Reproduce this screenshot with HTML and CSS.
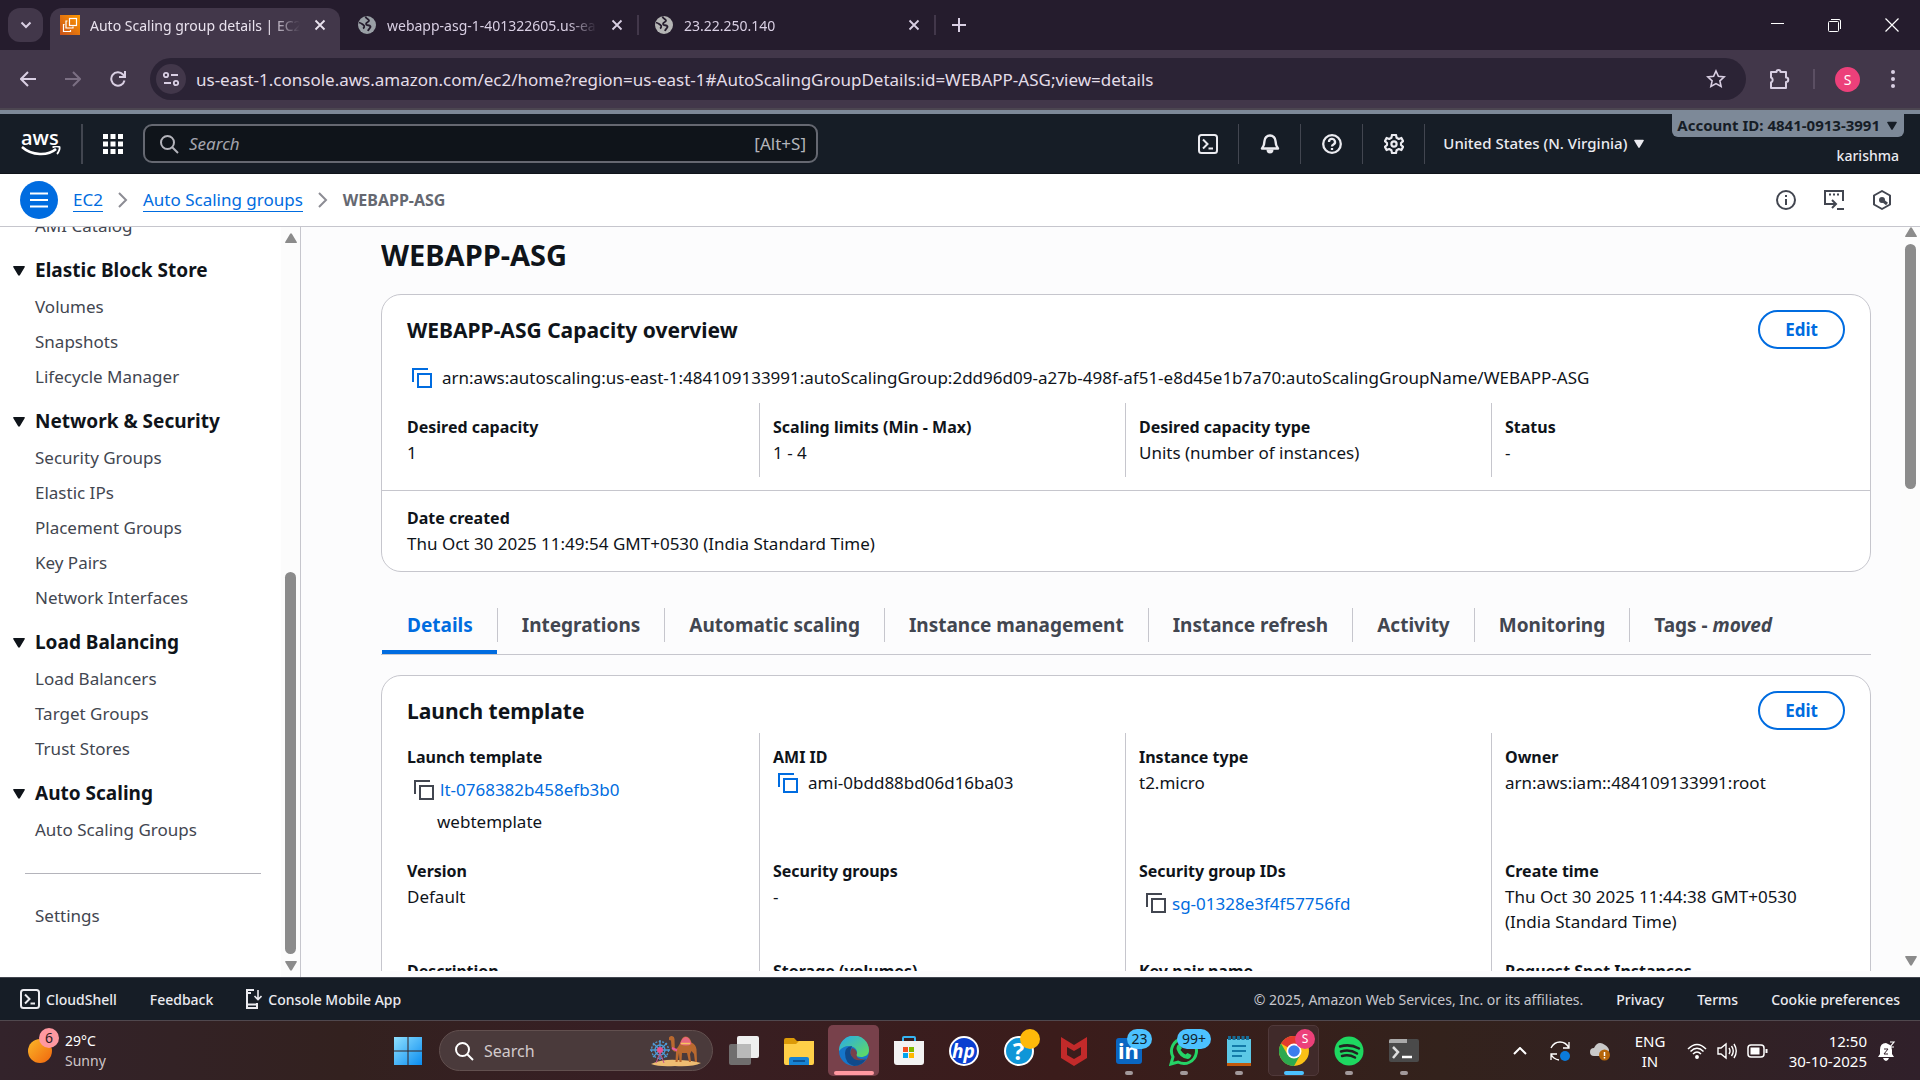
FILE: index.html
```html
<!DOCTYPE html>
<html lang="en">
<head>
<meta charset="utf-8">
<title>Auto Scaling group details | EC2</title>
<link rel="stylesheet" href="styles.css">
</head>
<body>
<svg class="defs" aria-hidden="true">
  <symbol id="close" viewBox="0 0 12 12"><path d="M1.5 1.5l9 9M10.500 1.500l-9 9" stroke="currentColor" stroke-width="1.800" fill="none"/></symbol>
  <symbol id="globe" viewBox="0 0 20 20"><circle cx="10" cy="10" r="9" fill="currentColor"/><path d="M8.500 1.500C9 4 11 3.500 12 5.500c.5 1.500-3 1.500-3 3.500s3.500.5 4.500 2.500c.5 1.500-2 2-2.500 4.500M2 7.500c2 .5 3 1.500 4.500 2.500 1.500 1 .5 3-.500 3.500" fill="none" stroke="#251c2d" stroke-width="1.800"/></symbol>
  <symbol id="copy" viewBox="0 0 20 20"><path d="M1 14V1h15" fill="none" stroke="currentColor" stroke-width="2"/><rect x="6" y="6" width="13" height="13" fill="none" stroke="currentColor" stroke-width="2"/></symbol>
  <symbol id="shell" viewBox="0 0 20 20"><rect x="1" y="1" width="18" height="18" rx="2.500" fill="none" stroke="currentColor" stroke-width="2"/><path d="M5 5.500l4.500 4.500L5 14.500M10.500 14.500H15" fill="none" stroke="currentColor" stroke-width="2"/></symbol>
  <symbol id="chev" viewBox="0 0 10 16"><path d="M1 1l7 7-7 7" fill="none" stroke="#8c8c94" stroke-width="2"/></symbol>
  <symbol id="tri" viewBox="0 0 12 10"><path d="M1 0h10q1.500 0 .5 1.500L7 9q-1 1.500-2 0L.5 1.500Q-.5 0 1 0z" fill="currentColor"/></symbol>
  <symbol id="mag" viewBox="0 0 20 20"><circle cx="8.500" cy="8.500" r="6.500" fill="none" stroke="currentColor" stroke-width="2"/><path d="M13 13l6 6" stroke="currentColor" stroke-width="2"/></symbol>
</svg>

<header class="browser">
  <div class="tabstrip">
    <button class="tab-search" aria-label="Search tabs"><svg width="12" height="8" viewBox="0 0 12 8"><path d="M1.500 1.500L6 6l4.500-4.500" fill="none" stroke="currentColor" stroke-width="2"/></svg></button>
    <div class="btab active">
      <svg class="fav" viewBox="0 0 20 20"><defs><linearGradient id="og" x1="0" y1="1" x2="1" y2="0"><stop offset="0" stop-color="#c8511b"/><stop offset="1" stop-color="#f90"/></linearGradient></defs><rect width="20" height="20" fill="url(#og)"/><g fill="none" stroke="#fff" stroke-width="1.200"><rect x="9.500" y="3.500" width="7" height="7"/><path d="M7.500 6h-1.500v7h7v-1.500M4.500 9.500H3.500v7h7v-1.500"/></g></svg>
      <span class="btitle">Auto Scaling group details | EC2 | us-east-1</span>
      <button class="x" aria-label="Close tab"><svg width="12" height="12"><use href="#close"/></svg></button>
    </div>
    <div class="btab">
      <svg class="fav grey-globe"><use href="#globe"/></svg>
      <span class="btitle">webapp-asg-1-401322605.us-east-1.elb</span>
      <button class="x" aria-label="Close tab"><svg width="12" height="12"><use href="#close"/></svg></button>
    </div>
    <span class="bsep"></span>
    <div class="btab third">
      <svg class="fav light-globe"><use href="#globe"/></svg>
      <span class="btitle">23.22.250.140</span>
      <button class="x" aria-label="Close tab"><svg width="12" height="12"><use href="#close"/></svg></button>
    </div>
    <span class="bsep"></span>
    <button class="newtab" aria-label="New tab"><svg width="14" height="14" viewBox="0 0 14 14"><path d="M7 0v14M0 7h14" stroke="currentColor" stroke-width="2"/></svg></button>
    <div class="winctl">
      <button aria-label="Minimize"><svg width="14" height="14"><path d="M0 5.500h13" stroke="currentColor"/></svg></button>
      <button aria-label="Restore"><svg width="14" height="14" fill="none" stroke="currentColor"><rect x=".5" y="3.500" width="10" height="10" rx="1"/><path d="M3 1.500h8q1.500 0 1.500 1.500v8"/></svg></button>
      <button aria-label="Close"><svg width="14" height="14"><path d="M.5.5l13 13M13.500.5l-13 13" stroke="currentColor" stroke-width="1.200"/></svg></button>
    </div>
  </div>
  <div class="toolbar">
    <button class="nav" aria-label="Back"><svg width="16" height="16" viewBox="0 0 16 16"><path d="M16 8H1M8 1L1 8l7 7" fill="none" stroke="currentColor" stroke-width="2"/></svg></button>
    <button class="nav dim" aria-label="Forward"><svg width="16" height="16" viewBox="0 0 16 16"><path d="M0 8h15M8 1l7 7-7 7" fill="none" stroke="currentColor" stroke-width="2"/></svg></button>
    <button class="nav" aria-label="Reload"><svg width="16" height="16" viewBox="0 0 16 16"><path d="M14.500 9.500A6.700 6.700 0 1 1 13 3.500L14.500 5M15 0v6H9" fill="none" stroke="currentColor" stroke-width="2"/></svg></button>
    <div class="omni">
      <button class="site" aria-label="Site information"><svg width="16" height="16" viewBox="0 0 16 16" fill="none" stroke="currentColor" stroke-width="1.800"><circle cx="3" cy="4" r="2.200"/><path d="M8 4h7M1 12h7"/><circle cx="13" cy="12" r="2.200"/></svg></button>
      <input class="url" aria-label="Address" value="us-east-1.console.aws.amazon.com/ec2/home?region=us-east-1#AutoScalingGroupDetails:id=WEBAPP-ASG;view=details">
      <button class="star" aria-label="Bookmark"><svg width="20" height="20" viewBox="0 0 20 20"><path d="M10 2l2.400 5.300 5.800.6-4.300 3.900 1.200 5.700L10 14.600l-5.100 2.900 1.200-5.700L1.800 7.900l5.800-.6z" fill="none" stroke="currentColor" stroke-width="1.600"/></svg></button>
    </div>
    <button class="ext" aria-label="Extensions"><svg width="22" height="22" viewBox="0 0 22 22"><path d="M2 4h5.500a2 2 0 1 1 4 0H17v5.500a2.200 2.200 0 1 1 0 4.500v6H2v-5.500a2.700 2.700 0 0 0 0-5z" fill="none" stroke="currentColor" stroke-width="2" stroke-linejoin="round"/></svg></button>
    <span class="tsep"></span>
    <button class="avatar">S</button>
    <button class="dots" aria-label="Menu"><svg width="4" height="20" fill="currentColor"><circle cx="2" cy="3" r="2"/><circle cx="2" cy="10" r="2"/><circle cx="2" cy="17" r="2"/></svg></button>
  </div>
</header>

<div class="console">
<header class="awsbar">
  <a class="logo" href="#" aria-label="AWS home"><span>aws</span><svg width="40" height="11" viewBox="0 0 40 11"><path d="M1 1c10 9 26 9 34 2" fill="none" stroke="#fff" stroke-width="2.500"/><path d="M31.500 1.500c3-1.500 6-1 7-.5.500 1.500-.500 5-2.500 7" fill="none" stroke="#fff" stroke-width="1.800"/></svg></a>
  <button class="apps" aria-label="Services"><svg width="20" height="20" fill="#fff"><path d="M0 0h5v5H0zM7.500 0h5v5h-5zM15 0h5v5h-5zM0 7.500h5v5H0zM7.500 7.500h5v5h-5zM15 7.500h5v5h-5zM0 15h5v5H0zM7.500 15h5v5h-5zM15 15h5v5h-5z"/></svg></button>
  <label class="search"><svg width="20" height="20"><use href="#mag"/></svg><input type="text" placeholder="Search" aria-label="Search"><span>[Alt+S]</span></label>
  <div class="awsicons">
    <button aria-label="CloudShell"><svg width="20" height="20"><use href="#shell"/></svg></button>
    <button aria-label="Notifications"><svg width="20" height="20" viewBox="0 0 20 20"><path d="M10 1.500a5.500 5.500 0 0 0-5.500 5.500c0 4-1 5.500-2.500 7.500h16c-1.500-2-2.500-3.500-2.500-7.500A5.500 5.500 0 0 0 10 1.500z" fill="none" stroke="currentColor" stroke-width="2.400" stroke-linejoin="round"/><path d="M6.500 15.500a3.500 4 0 0 0 7 0z" fill="currentColor"/></svg></button>
    <button aria-label="Help"><svg width="20" height="20" viewBox="0 0 20 20" fill="none" stroke="currentColor" stroke-width="2.300"><circle cx="10" cy="10" r="8.800"/><path d="M7 8a3 3 0 1 1 4.500 2.500C10.300 11.200 10 11.500 10 12.500M10 14v2"/></svg></button>
    <button aria-label="Settings"><svg width="20" height="20" viewBox="0 0 20 20" fill="none" stroke="currentColor" stroke-width="2.200" stroke-linejoin="round"><path d="M8 1h4l.6 2.800 2.200 1.200 2.600-1 1.700 3.200L17 9v2l2.100 1.800-1.700 3.200-2.600-1-2.200 1.200L12 19H8l-.6-2.800L5.200 15l-2.600 1-1.700-3.200L3 11V9L.9 7.200 2.600 4l2.600 1 2.200-1.200z"/><circle cx="10" cy="10" r="2.600"/></svg></button>
  </div>
  <button class="region">United States (N. Virginia)<svg width="10" height="10"><use href="#tri"/></svg></button>
  <div class="account"><button class="acct">Account ID: 4841-0913-3991<svg width="10" height="10"><use href="#tri"/></svg></button><span class="user">karishma</span></div>
</header>

<nav class="crumbs">
  <button class="burger" aria-label="Toggle navigation"><svg width="18" height="16"><path d="M0 1.500h18M0 8h18M0 14.500h18" stroke="#fff" stroke-width="2"/></svg></button>
  <a href="#">EC2</a><svg class="cv"><use href="#chev"/></svg><a href="#">Auto Scaling groups</a><svg class="cv"><use href="#chev"/></svg><b>WEBAPP-ASG</b>
  <div class="tools">
    <button aria-label="Info"><svg width="20" height="20" viewBox="0 0 20 20" fill="none" stroke="currentColor" stroke-width="2"><circle cx="10" cy="10" r="9"/><path d="M10 9v6M10 5v2"/></svg></button>
    <button aria-label="Code"><svg width="20" height="20" viewBox="0 0 20 20" fill="none" stroke="currentColor" stroke-width="2"><path d="M5 14H1V1h18v10M13 19h7M5 14h6M8 10l4 4-4 4"/><path d="M5 4.500h2M9 4.500h2M13 4.500h2"/></svg></button>
    <button aria-label="Amazon Q"><svg width="20" height="20" viewBox="0 0 20 20" fill="none" stroke="currentColor" stroke-width="2"><path d="M10 1l8 4.500v9L10 19l-8-4.500v-9z" stroke-linejoin="round"/><circle cx="10" cy="10" r="2" fill="currentColor"/><path d="M10 10l5 4" stroke-width="3"/></svg></button>
  </div>
</nav>

<div class="body">
  <aside class="side">
    <div class="sidenav">
      <ul><li><a href="#">AMI Catalog</a></li></ul>
      <h3><svg width="12" height="10"><use href="#tri"/></svg>Elastic Block Store</h3>
      <ul><li><a href="#">Volumes</a></li><li><a href="#">Snapshots</a></li><li><a href="#">Lifecycle Manager</a></li></ul>
      <h3><svg width="12" height="10"><use href="#tri"/></svg>Network &amp; Security</h3>
      <ul><li><a href="#">Security Groups</a></li><li><a href="#">Elastic IPs</a></li><li><a href="#">Placement Groups</a></li><li><a href="#">Key Pairs</a></li><li><a href="#">Network Interfaces</a></li></ul>
      <h3><svg width="12" height="10"><use href="#tri"/></svg>Load Balancing</h3>
      <ul><li><a href="#">Load Balancers</a></li><li><a href="#">Target Groups</a></li><li><a href="#">Trust Stores</a></li></ul>
      <h3><svg width="12" height="10"><use href="#tri"/></svg>Auto Scaling</h3>
      <ul><li><a href="#">Auto Scaling Groups</a></li></ul>
      <hr>
      <ul><li><a href="#">Settings</a></li></ul>
    </div>
    <div class="bar sidebar-bar"><svg class="up" width="12" height="10"><use href="#tri"/></svg><i class="before"></i><i class="thumb"></i><svg width="12" height="10"><use href="#tri"/></svg></div>
  </aside>

  <main class="content">
    <div class="scroll">
    <h1>WEBAPP-ASG</h1>
    <section class="card">
      <div class="chead"><h2>WEBAPP-ASG Capacity overview</h2><button class="edit">Edit</button></div>
      <div class="arn"><button class="cp" aria-label="Copy ARN"><svg width="20" height="20"><use href="#copy"/></svg></button><span>arn:aws:autoscaling:us-east-1:484109133991:autoScalingGroup:2dd96d09-a27b-498f-af51-e8d45e1b7a70:autoScalingGroupName/WEBAPP-ASG</span></div>
      <dl class="grid">
        <div><dt>Desired capacity</dt><dd>1</dd></div>
        <div><dt>Scaling limits (Min - Max)</dt><dd>1 - 4</dd></div>
        <div><dt>Desired capacity type</dt><dd>Units (number of instances)</dd></div>
        <div><dt>Status</dt><dd>-</dd></div>
      </dl>
      <dl class="foot"><dt>Date created</dt><dd>Thu Oct 30 2025 11:49:54 GMT+0530 (India Standard Time)</dd></dl>
    </section>

    <nav class="tabs">
      <button class="on">Details</button><button>Integrations</button><button>Automatic scaling</button><button>Instance management</button><button>Instance refresh</button><button>Activity</button><button>Monitoring</button><button><span>Tags - <em>moved</em></span></button>
    </nav>

    <section class="card">
      <div class="chead"><h2>Launch template</h2><button class="edit">Edit</button></div>
      <dl class="grid many">
        <div><dt>Launch template</dt><dd class="idrow"><button class="cp grey" aria-label="Copy template ID"><svg width="20" height="20"><use href="#copy"/></svg></button><a href="#">lt-0768382b458efb3b0</a></dd><dd class="sub">webtemplate</dd></div>
        <div><dt>AMI ID</dt><dd class="ami"><button class="cp" aria-label="Copy AMI ID"><svg width="20" height="20"><use href="#copy"/></svg></button>ami-0bdd88bd06d16ba03</dd></div>
        <div><dt>Instance type</dt><dd>t2.micro</dd></div>
        <div><dt>Owner</dt><dd>arn:aws:iam::484109133991:root</dd></div>
        <div><dt>Version</dt><dd>Default</dd></div>
        <div><dt>Security groups</dt><dd>-</dd></div>
        <div><dt>Security group IDs</dt><dd class="idrow"><button class="cp grey" aria-label="Copy group ID"><svg width="20" height="20"><use href="#copy"/></svg></button><a href="#">sg-01328e3f4f57756fd</a></dd></div>
        <div><dt>Create time</dt><dd>Thu Oct 30 2025 11:44:38 GMT+0530<br>(India Standard Time)</dd></div>
        <div><dt>Description</dt><dd>-</dd></div>
        <div><dt>Storage (volumes)</dt><dd>-</dd></div>
        <div><dt>Key pair name</dt><dd>-</dd></div>
        <div><dt>Request Spot Instances</dt><dd>No</dd></div>
      </dl>
    </section>
    </div>
  </main>
  <div class="bar main-bar"><svg class="up" width="12" height="10"><use href="#tri"/></svg><i class="thumb"></i><i class="after"></i><svg width="12" height="10"><use href="#tri"/></svg></div>
</div>

<footer class="awsfoot">
  <button><svg width="20" height="20"><use href="#shell"/></svg>CloudShell</button>
  <a href="#">Feedback</a>
  <a href="#" class="mob"><svg width="16" height="20" viewBox="0 0 16 20" fill="none" stroke="currentColor" stroke-width="2"><path d="M8 1H1v18h10v-5M1 15.500h10M1 4h4"/><path d="M12 1v9M8.500 7l3.500 3.500L15.500 7" stroke-width="1.600"/></svg>Console Mobile App</a>
  <span class="copyr">© 2025, Amazon Web Services, Inc. or its affiliates.</span>
  <a href="#">Privacy</a><a href="#">Terms</a><a href="#">Cookie preferences</a>
</footer>
</div>

<footer class="taskbar">
  <div class="weather"><span class="sun"><i>6</i></span><span>29°C<br><em>Sunny</em></span></div>
  <div class="apps-row">
    <button class="start" aria-label="Start"><svg width="30" height="30" viewBox="0 0 30 30"><defs><linearGradient id="wg" x1="0" y1="0" x2="1" y2="1"><stop offset="0" stop-color="#8fe0ff"/><stop offset="1" stop-color="#0a8cf0"/></linearGradient></defs><path d="M1 1h13.500v13.500H1zM15.500 1H29v13.500H15.500zM1 15.500h13.500V29H1zM15.500 15.500H29V29H15.500z" fill="url(#wg)"/></svg></button>
    <label class="tsearch"><svg width="20" height="20"><use href="#mag"/></svg><input type="text" placeholder="Search" aria-label="Search Windows">
      <svg width="52" height="32" viewBox="0 0 52 32"><path d="M1 29q12-5 26-4 14 0 24 3-8 4-26 3-16 1-24-2z" fill="#eebd72"/><g fill="none" stroke="#4d9bd8" stroke-width="1.300"><circle cx="10" cy="15" r="8.500" stroke-dasharray="2 1.500"/><circle cx="10" cy="15" r="5"/><path d="M10 5v20M0 15h20M3 8l14 14M17 8L3 22"/></g><circle cx="10" cy="15" r="3" fill="#e8508f"/><path d="M6 28l4-10 4 10" fill="none" stroke="#c8508f"/><path d="M19 2.500q1-2 3-1.500 2.500.5 2.500 3l.3 9q1.200 2 3.200-1 2-3 3-6.500Q33 1 36 1.500q4 .5 5.500 6 4.500 2 5 7l.5 12.500h-2l-1-8-2.500-3-1.500 3 1 8h-2l-2-9-5 0-.5 9h-2l-.500-9-1.500 9h-2l.500-10.500Q22.500 17.500 21.500 12L21 5.500l-2-.5z" fill="#b9692f"/><path d="M30 9q2.500-7.500 6-7 3.500 0 5.500 7-5.500 3-11.500 0z" fill="#e8687f"/><path d="M31 8.500h9" stroke="#f6c65c" stroke-width="1.500"/><path d="M22 13l5 2.500" stroke="#e85ba0" stroke-width="2"/></svg></label>
    <button class="app" aria-label="Task view"><svg width="30" height="30"><rect x="8" width="22" height="22" rx="2" fill="#efefef"/><rect y="8" width="22" height="21" rx="2" fill="#777" opacity=".9"/><rect x="8" y="8" width="14" height="14" fill="#b9b9b9"/></svg></button>
    <button class="app" aria-label="File Explorer"><svg width="30" height="30"><path d="M0 4q0-2 2-2h8l3 3h15q2 0 2 2v8H0z" fill="#dc9a08"/><path d="M0 8h12l3-3h15v22q0 2-2 2H2q-2 0-2-2z" fill="#ffcf48"/><path d="M5 29v-6q0-2 2-2h16q2 0 2 2v6z" fill="#1683d4"/><path d="M9 25h12" stroke="#0b5394" stroke-width="2"/></svg></button>
    <button class="app tile edge" aria-label="Edge"><svg width="30" height="30" viewBox="0 0 30 30"><defs><linearGradient id="eg" x1="0" y1="0" x2="1" y2="1"><stop offset="0" stop-color="#27a8ef"/><stop offset="1" stop-color="#63df58"/></linearGradient></defs><circle cx="15" cy="15" r="15" fill="#1676ca"/><path d="M0 15A15 15 0 0 1 30 14c0 5-4 7-8 7-5 0-6-2-4-4 1-6-11-11-18-2z" fill="url(#eg)"/><path d="M6 17q0-6 7-7-4 8 2 12 6 4 12 1-4 7-12 7-9-2-9-13z" fill="#114a8b"/><path d="M18 17q-1-4-5-5-4 6 2 11 6 3 13-1-2 1-6 1-6-1-4-6z" fill="#78414b"/></svg></button>
    <button class="app" aria-label="Store"><svg width="30" height="30"><path d="M9 6V2q0-1 1-1h10q1 0 1 1v4" fill="none" stroke="#35b4f3" stroke-width="2"/><path d="M0 5h30v21q0 3-3 3H3q-3 0-3-3z" fill="#f3f3f3"/><path fill="#f25022" d="M9 11h5v5H9z"/><path fill="#7fba00" d="M15 11h5v5h-5z"/><path fill="#00a4ef" d="M9 17h5v5H9z"/><path fill="#ffb900" d="M15 17h5v5h-5z"/></svg></button>
    <button class="app" aria-label="HP"><span class="hp">hp</span></button>
    <button class="app" aria-label="Get help"><span class="help">?</span><i class="badge yellow"></i></button>
    <button class="app" aria-label="McAfee"><svg width="28" height="30"><path d="M1 1l13 8 13-8v21l-13 8-13-8zM7 11v8l7 4 7-4v-8l-7 4z" fill="#c22a2a" fill-rule="evenodd"/></svg></button>
    <button class="app run" aria-label="LinkedIn"><span class="li">in</span><i class="badge">23</i></button>
    <button class="app run" aria-label="WhatsApp"><svg width="30" height="30"><path d="M2 28l2-7A12.500 12.500 0 1 1 9 26z" fill="none" stroke="#25d366" stroke-width="3"/><path d="M10 8l3 4-1.500 2q2 3 5 4.500l2-1.500 4 2q-1 4-4 4-8-1-11-10 0-4 2.500-5z" fill="#25d366"/></svg><i class="badge wide">99+</i></button>
    <button class="app run" aria-label="Notepad"><svg width="24" height="30"><path d="M0 26h24v4H0z" fill="#c2590c"/><path d="M0 3h24v24H0z" fill="#5cc8e6"/><path d="M1 2h22" stroke="#176c96" stroke-width="4" stroke-dasharray="3 1.500"/><path d="M5 10h14M5 15h14M5 20h10" stroke="#137aa8" stroke-width="2"/></svg></button>
    <button class="app tile chrome" aria-label="Chrome"><svg width="30" height="30" viewBox="-15 -15 30 30"><circle r="15" fill="#fbc116"/><path d="M0 0L-13-7.500A15 15 0 0 1 13-7.500z" fill="#e33b2e"/><path d="M-13-7.500A15 15 0 0 0 0 15L6.500 3.500-6.500 3.500z" fill="#2da94f"/><circle r="7.500" fill="#fff"/><circle r="5.800" fill="#3b7ded"/></svg><i class="badge pink">S</i></button>
    <button class="app run" aria-label="Spotify"><svg width="30" height="30"><circle cx="15" cy="15" r="14.500" fill="#1ed760"/><path d="M6 10.500q10-3 19 2M7 15.500q9-2.500 16 2M8 20q7-2 13 1.500" fill="none" stroke="#222" stroke-width="2.500" stroke-linecap="round"/></svg></button>
    <button class="app run" aria-label="Terminal"><svg width="30" height="24"><rect width="30" height="23" rx="2" fill="#4a4a4a"/><path d="M0 4V2q0-2 2-2h16v4z" fill="#aaa"/><path d="M4 8l5 5-5 6" fill="none" stroke="#ddd" stroke-width="2.500"/><path d="M13 18h10" stroke="#fff" stroke-width="2.500"/></svg></button>
  </div>
  <div class="tray">
    <svg width="14" height="8"><path d="M1 7l6-6 6 6" fill="none" stroke="#fff" stroke-width="2"/></svg>
    <svg width="20" height="20"><path d="M1 7Q4 1 10 1t9 6M19 1v6h-6M1 19v-6h6M1 13q2 5 8 6" fill="none" stroke="#fff" stroke-width="1.300"/><circle cx="15" cy="15" r="5" fill="#0b7bdc"/></svg>
    <svg width="20" height="20"><path d="M4 15a4 4 0 0 1 0-8q4-8 11-3 6 4 3 8l-5 3z" fill="#c9c9c9"/><circle cx="14.500" cy="14" r="5.500" fill="#b5650a"/><path d="M14.500 11v4M14.500 16v1.500" stroke="#fff" stroke-width="1.500"/></svg>
    <span class="lang">ENG<br>IN</span>
    <svg width="20" height="16" viewBox="0 0 20 16" fill="none" stroke="#fff" stroke-width="1.500"><path d="M1 6q9-9 18 0M3.500 8.500q6.500-6.500 13 0M6 11q4-4 8 0"/><circle cx="10" cy="14" r="1.200" fill="#fff"/></svg>
    <svg width="20" height="18" viewBox="0 0 20 18" fill="none" stroke="#fff" stroke-width="1.400"><path d="M1 6h3l5-4v14l-5-4H1zM12 6q2 3 0 6M14.500 4q3.500 5 0 10M17 2q4.500 7 0 14"/></svg>
    <svg width="21" height="14" viewBox="0 0 21 14"><rect x="1" y="1" width="16" height="12" rx="3" fill="none" stroke="#fff" stroke-width="1.500"/><rect x="3.500" y="3.500" width="9" height="7" fill="#fff"/><path d="M19.500 5v4" stroke="#fff" stroke-width="2"/></svg>
    <span class="clock">12:50<br>30-10-2025</span>
    <svg width="18" height="20" viewBox="0 0 18 20"><path d="M8 2q-6 0-6 7v4l-2 3h16l-2-3V9q0-3-2-5zM5 17h6q-1 3-3 3t-3-3z" fill="#fff"/><path d="M6 8h4l-4 5h4" stroke="#33202b" fill="none"/><path d="M12 1h4l-4 5h4" stroke="#fff" stroke-width="1.200" fill="none"/></svg>
  </div>
</footer>
</body>
</html>
```

FILE: styles.css
```css
* { box-sizing: border-box; }
body { margin: 0; height: 100vh; display: flex; flex-direction: column; overflow: hidden; font: 17px/25px "Noto Sans", sans-serif; color: #0f141a; }
button, input { font: inherit; color: inherit; background: none; border: 0; padding: 0; margin: 0; outline: 0; }
button { display: flex; align-items: center; justify-content: center; cursor: pointer; }
a { color: #006ce0; text-decoration: none; }
svg { display: block; flex: none; }
ul, dl, dd { margin: 0; padding: 0; list-style: none; }
h1, h2, h3 { margin: 0; }
.defs { position: absolute; width: 0; height: 0; }

/* browser chrome */
.browser { background: #42374a; color: #d9cfe3; }
.tabstrip { background: #251c2d; height: 50px; display: flex; align-items: center; padding-left: 8px; font-size: 14px; }
.tab-search { width: 35px; height: 34px; border-radius: 12px; background: #42374a; margin-right: 7px; }
.btab { width: 290px; height: 42px; align-self: flex-end; display: flex; align-items: center; padding: 0 14px 8px 10px; margin-left: 1px; }
.btab.active { background: #42374a; color: #e9e2ee; border-radius: 12px 12px 0 0; margin: 0 6px 0 0; }
.btab.third { margin-left: 5px; }
.fav { width: 20px; height: 20px; margin-right: 10px; }
.grey-globe { color: #9aa0a6; }
.light-globe { color: #b5b5b5; }
.btitle { flex: 1; overflow: hidden; white-space: nowrap; margin-right: 14px; -webkit-mask-image: linear-gradient(90deg, #000 86%, transparent); mask-image: linear-gradient(90deg, #000 86%, transparent); }
.bsep { width: 2px; height: 20px; background: #42374a; }
.newtab { width: 40px; height: 34px; margin-left: 3px; }
.winctl { margin-left: auto; display: flex; color: #fff; }
.winctl button { width: 57px; height: 50px; }
.toolbar { height: 60px; display: flex; align-items: center; padding: 0 14px 0 5px; border-bottom: 2px solid #4c4651; }
.nav { width: 45px; height: 40px; }
.nav.dim { color: #7b6f83; }
.omni { flex: 1; height: 42px; margin-left: 10px; border-radius: 21px; background: #2b2335; display: flex; align-items: center; padding: 0 20px 0 6px; }
.site { width: 30px; height: 30px; border-radius: 50%; background: #42374a; margin-right: 10px; }
.url { flex: 1; min-width: 0; height: 30px; color: #e3dde8; }
.ext { width: 67px; }
.tsep { width: 2px; height: 20px; background: #5b4f63; }
.avatar { width: 25px; height: 25px; border-radius: 50%; background: #ec407a; color: #fff; font-size: 14px; margin: 0 20px; }
.dots { width: 26px; }

/* console header */
.console { flex: 1; min-height: 0; display: flex; flex-direction: column; }
.awsbar { height: 64px; border-top: 4px solid #7d8998; background: #161d26; color: #ebebf0; display: flex; align-items: center; font-weight: 500; font-size: 15px; border-bottom: 1px solid #0f141a; }
.logo { width: 83px; height: 40px; border-right: 2px solid #424650; padding-left: 21px; color: #fff; display: flex; flex-direction: column; justify-content: center; }
.logo span { font: 600 20px/16px "Open Sans", sans-serif; }
.apps { width: 60px; }
.search { width: 675px; height: 39px; border: 2px solid #656871; border-radius: 9px; background: #0f141a; display: flex; align-items: center; padding: 0 10px 0 14px; font-weight: 400; font-size: 17px; color: #b4b4bb; }
.search input { flex: 1; min-width: 0; padding-left: 10px; }
.search input::placeholder { color: #a4a4ad; font-style: italic; opacity: 1; }
.awsicons { margin-left: auto; display: flex; }
.awsicons button { width: 62px; height: 40px; border-right: 1px solid #424650; }
.region { padding: 0 28px 0 18px; gap: 7px; }
.account { align-self: stretch; display: flex; flex-direction: column; align-items: flex-end; padding-right: 16px; }
.acct { height: 23px; background: #7d8998; color: #161d26; font-weight: 700; padding: 0 7px 0 5px; gap: 7px; border-radius: 0 0 6px 6px; }
.user { margin: 6px 5px 0 0; font-size: 14px; }
.crumbs { height: 53px; flex: none; display: flex; align-items: center; padding: 0 28px 0 20px; border-bottom: 1px solid #c6c6cd; background: #fff; }
.crumbs a { border-bottom: 1px solid #006ce0; line-height: 22px; }
.crumbs b { color: #656871; font-size: 16px; }
.burger { width: 38px; height: 38px; border-radius: 50%; background: #006ce0; margin-right: 15px; }
.cv { width: 10px; height: 16px; margin: 0 15px; }
.tools { margin-left: auto; display: flex; gap: 28px; color: #424650; }

/* body */
.body { flex: 1; min-height: 0; display: flex; background: #fcfcfd; }
.side { width: 301px; border-right: 1px solid #c6c6cd; background: #fff; display: flex; }
.sidenav { flex: 1; min-height: 0; overflow: hidden; display: flex; flex-direction: column; justify-content: flex-end; padding-bottom: 44px; }
.sidenav h3 { display: flex; align-items: center; gap: 10px; padding-left: 13px; font-size: 19px; line-height: 25px; margin: 15px 0 6px; }
.sidenav li { padding: 5px 0 5px 35px; }
.sidenav a { color: #424650; }
.sidenav hr { margin: 26px 20px 24px 25px; border: 0; border-top: 1px solid #b4b4bb; }
.sidenav > * { flex: none; }
.bar { width: 19px; background: #fcfcfc; display: flex; flex-direction: column; align-items: center; color: #8b8b8b; padding: 6px 0; }
.bar .up { transform: rotate(180deg); }
.thumb { width: 11px; border-radius: 6px; background: #8b8b8b; margin: 7px 0; }
.sidebar-bar .thumb { flex: 51 0 0; }
.sidebar-bar .before { flex: 43 0 0; }
.main-bar { padding: 0 0 11px; }
.main-bar .thumb { flex: 34 0 0; }
.main-bar .after { flex: 64 0 0; }
.content { flex: 1; min-width: 0; padding: 0 30px 6px 80px; display: flex; }
.scroll { flex: 1; min-width: 0; overflow: hidden; padding-top: 10px; }
h1 { font-size: 29px; line-height: 36px; margin-bottom: 21px; }
.card { background: #fff; border: 1px solid #c6c6cd; border-radius: 20px; padding: 15px 0 0; }
.chead { display: flex; align-items: center; justify-content: space-between; padding: 0 25px; }
h2 { font-size: 21px; line-height: 30px; }
.edit { width: 87px; height: 39px; border: 2px solid #006ce0; border-radius: 20px; color: #006ce0; font-weight: 700; }
.arn { display: flex; align-items: center; margin: 16px 25px 13px; }
.cp { color: #006ce0; margin: 0 10px 0 5px; }
.cp.grey { color: #424650; margin: 0 6px 0 7px; }
.grid { display: grid; grid-template-columns: repeat(4, minmax(0, 1fr)); column-gap: 26px; padding: 0 25px; margin-bottom: 13px; }
.grid > div { padding: 12px 0; }
.grid > div:not(:nth-child(4n+1)) { border-left: 1px solid #c6c6cd; margin-left: -14px; padding-left: 13px; }
.grid.many { margin-top: 3px; }
.grid.many > div { padding-top: 0; padding-bottom: 25px; }
.grid.many > div:nth-child(-n+4) { padding-top: 12px; }
dt { font-weight: 700; font-size: 16px; }
.foot { border-top: 1px solid #c6c6cd; padding: 15px 25px; }
.idrow { display: flex; align-items: center; height: 39px; }
.grid.many > div:nth-child(7) .idrow { height: 38px; }
.sub { padding-left: 30px; }
.ami { display: flex; align-items: center; }
.tabs { display: flex; margin: 36px 0 20px; border-bottom: 1px solid #c6c6cd; padding-left: 1px; }
.tabs button { height: 46px; padding: 0 24px 12px 0; color: #424650; font-weight: 700; font-size: 19px; }
.tabs button::before { content: ""; width: 1px; height: 34px; background: #c6c6cd; margin-right: 24px; }
.tabs .on::before { background: none; width: 0; margin-right: 25px; }
.tabs .on { color: #006ce0; padding-bottom: 8px; border-bottom: 4px solid #006ce0; }

/* console footer */
.awsfoot { height: 44px; flex: none; background: #161d26; color: #ebebf0; border-top: 1px solid #424650; border-bottom: 1px solid #50484e; display: flex; align-items: center; padding: 0 20px; font-size: 14px; font-weight: 500; gap: 33px; }
.awsfoot a { color: #ebebf0; }
.awsfoot button { gap: 6px; }
.mob { display: flex; align-items: center; gap: 6px; }
.copyr { margin-left: auto; font-weight: 400; color: #c6c6cd; }

/* taskbar */
.taskbar { height: 59px; flex: none; display: flex; align-items: center; color: #fff; font-size: 14px; line-height: 20px; background: linear-gradient(90deg, #33232b, #33211f 18%, #371f24 32%, #3b1c1b 55%, #33221c 75%, #30202a); padding: 0 24px 0 28px; }
.weather { width: 356px; display: flex; align-items: center; gap: 13px; }
.weather em { font-style: normal; color: #cfc6c8; }
.sun { width: 24px; height: 24px; border-radius: 50%; background: linear-gradient(135deg, #fbb829, #f0650d); position: relative; }
.sun i { position: absolute; left: 11px; top: -11px; width: 20px; height: 20px; border-radius: 50%; background: #ff98a0; color: #2b1b20; font-style: normal; text-align: center; }
.apps-row { display: flex; align-items: center; }
.start { width: 48px; margin-right: 7px; }
.tsearch { width: 274px; height: 41px; margin-right: 3px; border-radius: 21px; border: 1px solid #62504f; background: #4a3a3b; display: flex; align-items: center; padding: 0 10px 0 14px; font-size: 16px; }
.tsearch input { flex: 1; min-width: 0; padding-left: 10px; }
.tsearch input::placeholder { color: #d2cacb; opacity: 1; }
.app { width: 55px; height: 59px; position: relative; flex: none; }
.tile::before { content: ""; position: absolute; inset: 4px 2px; border-radius: 5px; background: #78414b; }
.chrome::before { background: #402a2a; border: 1px solid #50393a; }
.tile svg { position: relative; }
.run::after, .tile::after { content: ""; position: absolute; left: 24px; bottom: 5px; width: 8px; height: 4px; border-radius: 2px; background: #a2999b; }
.edge::after { left: 8px; width: 40px; background: #ff98a0; }
.chrome::after { left: 18px; width: 20px; background: #4cc2ff; }
.badge { position: absolute; left: 26px; top: 8px; min-width: 25px; height: 20px; border-radius: 10px; background: #4cc2ff; color: #10222c; font-style: normal; text-align: center; }
.badge.wide { left: 21px; width: 34px; }
.badge.yellow { left: 29px; min-width: 20px; background: #ffb90a; }
.badge.pink { left: 29px; min-width: 20px; background: #ec407a; color: #fff; font-size: 12px; }
.hp, .help { width: 30px; height: 30px; border-radius: 50%; border: 2px solid #fff; background: #0a3fd0; display: flex; align-items: center; justify-content: center; font: italic 700 19px/20px "Noto Sans", sans-serif; }
.help { background: #0f96d8; font: 700 24px/26px "Noto Sans", sans-serif; }
.li { width: 26px; height: 26px; border-radius: 3px; background: #0a66c2; font-size: 22px; line-height: 24px; font-weight: 700; }
.tray { margin-left: auto; display: flex; align-items: center; font-size: 15px; }
.tray svg { margin-right: 10px; }
.tray svg:nth-child(1) { margin-right: 23px; }
.tray svg:nth-child(2), .tray svg:nth-child(3) { margin-right: 20px; }
.lang { text-align: center; width: 40px; margin-right: 17px; }
.clock { text-align: right; width: 89px; margin-right: 11px; }
.tray svg:last-child { margin-right: 0; }
```
